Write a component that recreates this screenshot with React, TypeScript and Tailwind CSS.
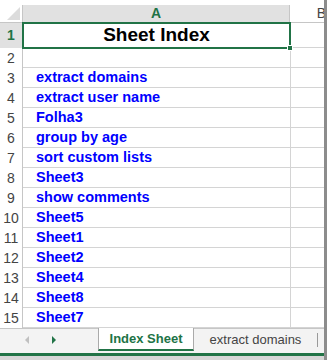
const ROWS = [
  "",
  "extract domains",
  "extract user name",
  "Folha3",
  "group by age",
  "sort custom lists",
  "Sheet3",
  "show comments",
  "Sheet5",
  "Sheet1",
  "Sheet2",
  "Sheet4",
  "Sheet8",
  "Sheet7",
];

function RowHeader({ n, active }: { n: number; active?: boolean }) {
  return (
    <div
      className={
        "w-[23px] shrink-0 flex items-center justify-center border-r border-[#c6c6c6] text-[14px] " +
        (active ? "bg-[#e1e1e1] text-[#217346] font-bold" : "text-[#444]")
      }
    >
      {n}
    </div>
  );
}

export default function App() {
  return (
    <div className="w-[327px] h-[360px] flex bg-white overflow-hidden font-['Liberation_Sans',Arial,sans-serif]">
      <div className="w-[324px] flex flex-col">
        <div className="h-[5px]" />
        {/* column headers */}
        <div className="h-[18px] flex border-b border-[#c6c6c6]">
          <div className="w-[23px] shrink-0 relative border-r border-[#c6c6c6]">
            <svg className="absolute right-[2px] bottom-[2px]" width="13" height="13" viewBox="0 0 13 13">
              <polygon points="13,0 13,13 0,13" fill="#dcdcdc" />
            </svg>
          </div>
          <div className="w-[267px] shrink-0 bg-[#e1e1e1] border-r border-[#c6c6c6] flex items-center justify-center text-[14px] font-bold text-[#217346]">
            A
          </div>
          <div className="flex-1 flex items-center justify-end overflow-hidden text-[14px] text-[#444]">
            <span className="-mr-[2px]">B</span>
          </div>
        </div>
        {/* row 1 */}
        <div className="h-[25px] flex">
          <RowHeader n={1} active />
          <div className="w-[267px] shrink-0 relative flex items-center justify-center text-[19px] font-bold text-black">
            <div className="absolute -left-[1px] -top-[1px] -right-[1px] -bottom-[1px] border-2 border-[#217346]" />
            <div className="absolute -right-[3px] -bottom-[3px] w-[6px] h-[6px] bg-[#217346] border border-white" />
            Sheet Index
          </div>
          <div className="flex-1 border-l border-b border-[#d4d4d4]" />
        </div>
        {ROWS.map((name, i) => (
          <div key={i} className="h-[20px] flex">
            <RowHeader n={i + 2} />
            <div className="w-[267px] shrink-0 border-b border-[#d4d4d4] flex items-center pl-[13px] pt-[1px] text-[14.5px] font-bold text-[#0000ff]">
              {name}
            </div>
            <div className="flex-1 border-l border-b border-[#d4d4d4]" />
          </div>
        ))}
        {/* sheet tabs */}
        <div className="h-[23px] flex bg-[#f3f3f3] border-t border-[#c6c6c6]">
          <div className="w-[98px] shrink-0 flex items-center">
            <svg className="ml-[24px]" width="6" height="10" viewBox="0 0 6 10">
              <polygon points="5,1 5,9 1,5" fill="#c0c0c0" />
            </svg>
            <svg className="ml-[21px]" width="6" height="10" viewBox="0 0 6 10">
              <polygon points="1,1 1,9 5,5" fill="#217346" />
            </svg>
          </div>
          <div className="w-[96px] shrink-0 -mt-[1px] bg-white border-x border-[#aaa] border-b-2 border-b-[#217346] flex items-center justify-center text-[13px] font-bold text-[#217346]">
            Index Sheet
          </div>
          <div className="w-[123px] shrink-0 flex items-center justify-center text-[13px] text-[#444]">
            extract domains
          </div>
          <div className="w-px h-[14px] self-center bg-[#9a9a9a]" />
        </div>
        <div className="h-[2px] bg-[#f3f3f3]" />
        <div className="h-[3px] bg-[#217346]" />
        <div className="flex-1 bg-[#d6d6d6]" />
      </div>
      <div className="w-[3px] bg-[#8c8c8c]" />
    </div>
  );
}
